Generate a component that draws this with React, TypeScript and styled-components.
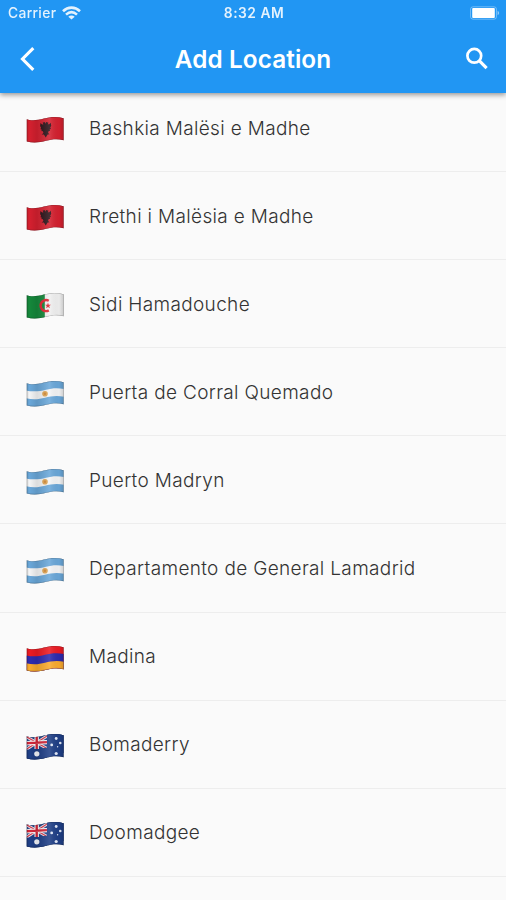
import React from "react";
import styled, { createGlobalStyle } from "styled-components";

const GlobalStyle = createGlobalStyle`
  * { box-sizing: border-box; }
  html, body { margin: 0; padding: 0; background: #fafafa; }
  body { font-family: Inter, Roboto, sans-serif; overflow: hidden; }
`;

const Screen = styled.div`
  width: 506px;
  height: 900px;
  overflow: hidden;
  display: flex;
  flex-direction: column;
  background: #fafafa;
`;

const Header = styled.header`
  flex: none;
  height: 93px;
  position: relative;
  z-index: 1;
  color: #fff;
  background: #2196f3;
  box-shadow: 0 2px 5px rgba(0, 0, 0, 0.4);
`;

const StatusBar = styled.div`
  height: 26px;
  padding: 0 6px 0 8px;
  display: grid;
  grid-template-columns: 1fr auto 1fr;
  align-items: center;
`;

const Carrier = styled.div`
  display: flex;
  align-items: center;
  gap: 6px;
  font-size: 13.8px;
  font-weight: 450;
  letter-spacing: 0.35px;
  opacity: 0.88;
`;

const Clock = styled.div`
  font-size: 13.8px;
  font-weight: 600;
  letter-spacing: 0.5px;
  opacity: 0.88;
`;

const BatteryIcon = styled.svg`
  justify-self: end;
  display: block;
`;

const NavBar = styled.div`
  height: 66px;
  padding: 0 18px;
  display: grid;
  grid-template-columns: 1fr auto 1fr;
  align-items: center;
`;

const Title = styled.h1`
  margin: 0;
  font-size: 24.3px;
  line-height: 30px;
  font-weight: 570;
  letter-spacing: 0.1px;
`;

const IconButton = styled.button<{ $end?: boolean }>`
  justify-self: ${(p) => (p.$end ? "end" : "start")};
  padding: 0;
  border: 0;
  background: none;
  color: inherit;
  display: flex;
`;

const List = styled.ul`
  margin: -9px 0 0;
  padding: 0;
  list-style: none;
`;

const Row = styled.li`
  height: 88.1px;
  padding: 0 26px;
  display: flex;
  align-items: center;
  gap: 24px;
  border-bottom: 1px solid #ededed;
`;

const FlagIcon = styled.svg`
  flex: none;
  width: 39px;
  height: 28px;
  margin-top: 5px;
  filter: drop-shadow(0 0.5px 0.6px rgba(0, 0, 0, 0.3));
`;

const Place = styled.span`
  padding-top: 2px;
  font-size: 19px;
  line-height: 24px;
  font-weight: 360;
  letter-spacing: 0.34px;
  color: #333;
  white-space: nowrap;
`;

type Country = "al" | "dz" | "ar" | "am" | "au";

const places: { name: string; country: Country }[] = [
  { name: "Bashkia Malësi e Madhe", country: "al" },
  { name: "Rrethi i Malësia e Madhe", country: "al" },
  { name: "Sidi Hamadouche", country: "dz" },
  { name: "Puerta de Corral Quemado", country: "ar" },
  { name: "Puerto Madryn", country: "ar" },
  { name: "Departamento de General Lamadrid", country: "ar" },
  { name: "Madina", country: "am" },
  { name: "Bomaderry", country: "au" },
  { name: "Doomadgee", country: "au" },
];

const wave = "M.8 3.2C5 4.8 12 4.2 18 2.5S31 .3 37.6 2.2V24.2C31 22.4 26 23.2 20 24.8S7 27.2 .8 25.4Z";

function FlagArt({ country }: { country: Country }) {
  switch (country) {
    case "al":
      return (
        <>
          <path fill="#d5202f" d="M0 0h39v28H0z" />
          <path
            fill="#2c1218"
            d="M19.2 7.8l1-1.8 2.3.7-.8 1.5 1.5.1 1.5-1.5.5 3-1 2 .8 1-1.4.8.5 1.2-1.6.4-.4 1.8 1.5 1.3-2 .1-1.9 3-1.8-2.9-2.2-.1 1.7-1.4-.5-1.7-1.6-.3.6-1.3-1.6-.7.9-1.1-1.1-2 .4-2.9 1.7 1.4 1.3-.1-.9-1.5 2.1-.8z"
          />
        </>
      );
    case "dz":
      return (
        <>
          <path fill="#f1f1f1" d="M0 0h39v28H0z" />
          <path fill="#15883b" d="M0 0h18.8v28H0z" />
          <path fill="none" stroke="#e02531" strokeWidth="2.4" d="M22.8 8.8A5.5 5.5 0 1 0 22.8 18.4" />
          <path
            fill="#e02531"
            d="M22 10.6l.7 2.2 2.3-.1-1.8 1.4.7 2.2-1.9-1.3-1.9 1.3.7-2.2-1.8-1.4 2.3.1z"
          />
        </>
      );
    case "ar":
      return (
        <>
          <path fill="#f4f5f6" d="M0 0h39v28H0z" />
          <path
            fill="#6aa8da"
            d="M0 0h39v9.3C32 7.6 26 8.2 20 9.8S6 12 0 10.4zM0 18.2C7 19.8 13 19.3 19 17.7S32 15.2 39 17.1V28H0z"
          />
          <circle cx="19" cy="13.7" r="2.8" fill="#dfa552" />
          <circle cx="19" cy="13.7" r="1.2" fill="#cf8638" />
        </>
      );
    case "am":
      return (
        <>
          <path fill="#ec1b23" d="M0 0h39v28H0z" />
          <path fill="#2d2bb0" d="M0 10.4C7 12 13 11.4 19 9.8S32 7.4 39 9.3V28H0z" />
          <path fill="#fbab2e" d="M0 18.2C7 19.8 13 19.3 19 17.7S32 15.2 39 17.1V28H0z" />
        </>
      );
    case "au":
      return (
        <>
          <path fill="#1f3f87" d="M0 0h39v28H0z" />
          <path stroke="#f2e9ee" strokeWidth="3" d="M0 3.5l21 12M0 16.5L21 3" />
          <path stroke="#d43a4b" strokeWidth="1.2" d="M0 3.5l21 12M0 16.5L21 3" />
          <path stroke="#fff" strokeWidth="4.4" d="M10.7 2v14M0 10.2l21-1.1" />
          <path stroke="#d5283b" strokeWidth="2.4" d="M10.7 2v14M0 10.2l21-1.1" />
          <path fill="#1f3f87" d="M0 16.4c8 1.2 14-.5 21-2V28H0zM21 0h18v20H21z" />
          <circle cx="10.8" cy="20.8" r="2.6" fill="#f4f6fc" />
          <g fill="#e4ebfa">
            <circle cx="30.2" cy="5.5" r="1.4" />
            <circle cx="25.7" cy="11.9" r="1.4" />
            <circle cx="34.3" cy="10" r="1.3" />
            <circle cx="31.6" cy="13.8" r=".7" />
            <circle cx="30.2" cy="20.5" r="1.6" />
          </g>
        </>
      );
  }
}

function Flag({ country, id }: { country: Country; id: string }) {
  return (
    <FlagIcon viewBox="0 0 39 28" aria-hidden="true">
      <defs>
        <clipPath id={`${id}-cloth`}>
          <path d={wave} />
        </clipPath>
        <linearGradient id={`${id}-shade`}>
          <stop offset="0" stopColor="#000" stopOpacity=".2" />
          <stop offset=".08" stopColor="#000" stopOpacity="0" />
          <stop offset=".28" stopColor="#000" stopOpacity=".1" />
          <stop offset=".6" stopColor="#fff" stopOpacity=".12" />
          <stop offset=".85" stopColor="#000" stopOpacity=".03" />
          <stop offset="1" stopColor="#000" stopOpacity=".2" />
        </linearGradient>
      </defs>
      <g clipPath={`url(#${id}-cloth)`}>
        <FlagArt country={country} />
        <path fill={`url(#${id}-shade)`} d="M0 0h39v28H0z" />
        <path d={wave} fill="none" stroke="#000" strokeOpacity=".2" strokeWidth="1.2" />
      </g>
    </FlagIcon>
  );
}

export default function App() {
  return (
    <>
      <GlobalStyle />
      <Screen>
        <Header>
          <StatusBar>
            <Carrier>
              Carrier
              <svg width="19" height="14" viewBox="0 0 19 14" fill="none" stroke="#fff" strokeWidth="2.6">
                <path d="M1 5.2C6 .4 13 .4 18 5.2M4 8.6c3.4-3 7.6-3 11 0" />
                <path fill="#fff" stroke="none" d="M9.5 13.6L6.3 10.7c1.8-1.5 4.600-1.5 6.4 0z" />
              </svg>
            </Carrier>
            <Clock>8:32 AM</Clock>
            <BatteryIcon width="31" height="14" viewBox="0 0 31 14">
              <rect x="1.5" y=".8" width="26" height="12.4" rx="2.5" fill="none" stroke="#fff" strokeOpacity=".35" />
              <rect x="3.2" y="2" width="22.6" height="10" rx="1" fill="#fff" />
              <path d="M28.600 4.800c2 .8 2 3.600 0 4.400z" fill="#fff" fillOpacity=".5" />
            </BatteryIcon>
          </StatusBar>
          <NavBar>
            <IconButton aria-label="Back">
              <svg width="19" height="26" viewBox="0 0 19 26" fill="none" stroke="#fff" strokeWidth="3.1">
                <path d="M15.3 2.2L4.5 13l10.8 10.8" />
              </svg>
            </IconButton>
            <Title>Add Location</Title>
            <IconButton $end aria-label="Search">
              <svg width="23" height="24" viewBox="0 0 23 24" fill="none" stroke="#fff" strokeWidth="2.7">
                <circle cx="9.3" cy="8.8" r="6.9" />
                <path d="M14.2 13.7l7.4 7.4" strokeWidth="3.2" />
              </svg>
            </IconButton>
          </NavBar>
        </Header>
        <List>
          {places.map((p, i) => (
            <Row key={p.name}>
              <Flag country={p.country} id={`flag${i}`} />
              <Place>{p.name}</Place>
            </Row>
          ))}
        </List>
      </Screen>
    </>
  );
}
